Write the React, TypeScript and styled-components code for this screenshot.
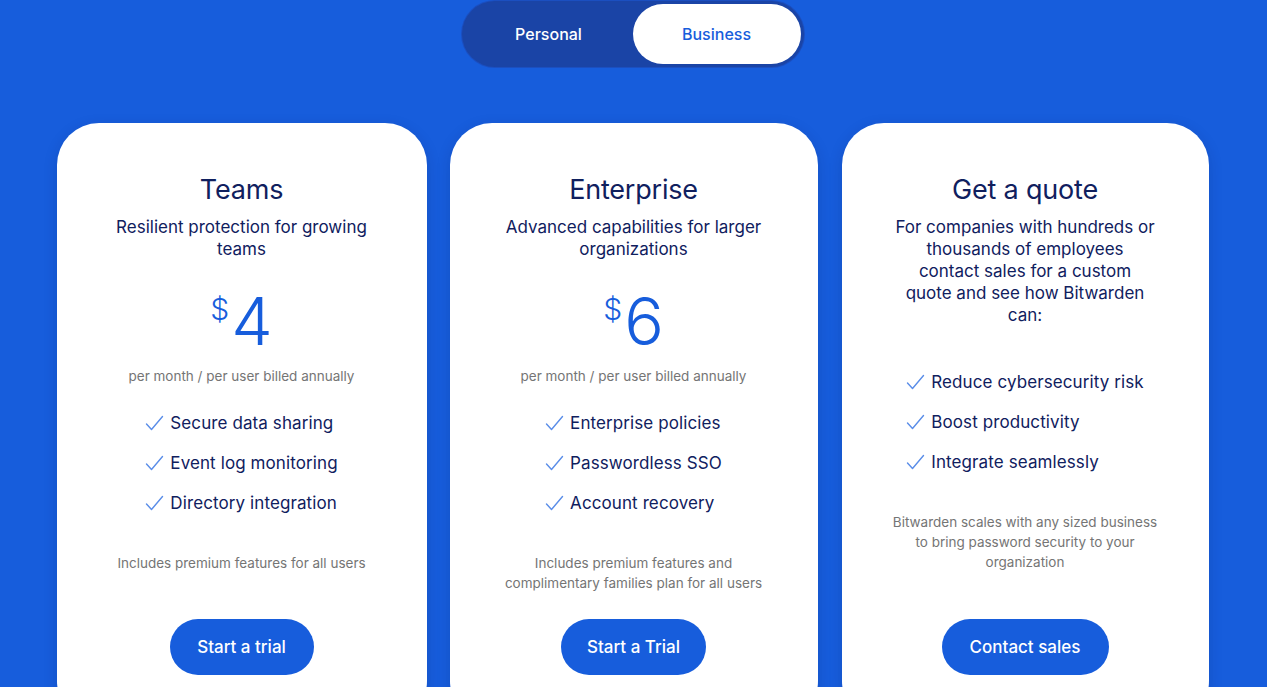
import styled, { createGlobalStyle } from "styled-components"

const GlobalStyle = createGlobalStyle`
  html, body {
    margin: 0;
    padding: 0;
    overflow: hidden;
    background: #175ddc;
  }
  body {
    font-family: Inter, "Noto Sans", sans-serif;
  }
`

const Page = styled.div`
  width: 1267px;
  height: 687px;
  overflow: hidden;
  background: #175ddc;
  display: flex;
  flex-direction: column;
  align-items: center;
  padding: 1px 2px 0 0;
  box-sizing: border-box;
`

const Toggle = styled.div`
  display: flex;
  align-items: center;
  width: 342px;
  height: 67px;
  padding: 3px;
  box-sizing: border-box;
  border-radius: 34px;
  background: #1a44a6;
  box-shadow: 0 0 0 1px #1b4fc0;
`

const ToggleOption = styled.div<{ $active?: boolean }>`
  flex: 1;
  height: 60px;
  display: flex;
  align-items: center;
  justify-content: center;
  border-radius: 30px;
  font-size: 16px;
  font-weight: 500;
  color: ${({ $active }) => ($active ? "#175ddc" : "#ffffff")};
  background: ${({ $active }) => ($active ? "#ffffff" : "transparent")};
`

const CardGrid = styled.div`
  display: grid;
  grid-template-columns: 370px 368px 368px;
  column-gap: 23px;
  margin-top: 56px;
  & > :nth-child(3) {
    margin-left: 1px;
  }
`

const Card = styled.div`
  height: 600px;
  background: #ffffff;
  border-radius: 42px;
  box-shadow: 0 4px 14px rgba(10, 30, 90, 0.18);
  display: flex;
  flex-direction: column;
  align-items: center;
  padding: 49px 20px 48px;
  box-sizing: border-box;
  text-align: center;
  color: #10205e;
`

const Title = styled.h2`
  margin: 0;
  font-size: 27px;
  line-height: 36px;
  font-weight: 400;
  letter-spacing: -0.2px;
`

const Subtitle = styled.p`
  margin: 8px 0 0;
  font-size: 17px;
  line-height: 22px;
  white-space: nowrap;
`

const Price = styled.div`
  margin-top: 25px;
  height: 72px;
  display: flex;
  justify-content: center;
  color: #175ddc;
  font-weight: 300;
`

const Currency = styled.span`
  font-size: 30px;
  line-height: 40px;
  margin-top: 4px;
  margin-right: 2px;
`

const Amount = styled.span`
  font-size: 66px;
  line-height: 72px;
`

const Billing = styled.div`
  margin-top: 9px;
  font-size: 13.5px;
  line-height: 20px;
  color: #757575;
`

const FeatureList = styled.ul<{ $gap: number }>`
  list-style: none;
  padding: 0;
  margin: ${({ $gap }) => $gap}px 0 0;
  text-align: left;
`

const Feature = styled.li`
  display: flex;
  align-items: center;
  gap: 6px;
  height: 40px;
  font-size: 17px;
  letter-spacing: 0.1px;
`

const Footnote = styled.p`
  margin: 30px 0 0;
  font-size: 13.5px;
  line-height: 20px;
  color: #757575;
  white-space: nowrap;
`

const ActionButton = styled.button<{ $width: number }>`
  margin-top: auto;
  width: ${({ $width }) => $width}px;
  height: 56px;
  flex-shrink: 0;
  border: none;
  border-radius: 28px;
  background: #175ddc;
  color: #ffffff;
  font-family: inherit;
  font-size: 17px;
  font-weight: 500;
  cursor: pointer;
`

const Check = () => (
  <svg width="19" height="16" viewBox="0 0 19 16" fill="none">
    <polyline points="1.5,9 6.5,14.5 17.5,1.5" stroke="#5a8de8" strokeWidth="1.4" strokeLinecap="round" strokeLinejoin="round" />
  </svg>
)

const Lines = ({ lines }: { lines: string[] }) => (
  <>
    {lines.map((l, i) => (
      <span key={i}>
        {l}
        {i < lines.length - 1 && <br />}
      </span>
    ))}
  </>
)

type Plan = {
  title: string
  subtitle: string[]
  price?: string
  features: string[]
  note: string[]
  cta: string
  ctaWidth: number
}

const plans: Plan[] = [
  {
    title: "Teams",
    subtitle: ["Resilient protection for growing", "teams"],
    price: "4",
    features: ["Secure data sharing", "Event log monitoring", "Directory integration"],
    note: ["Includes premium features for all users"],
    cta: "Start a trial",
    ctaWidth: 144,
  },
  {
    title: "Enterprise",
    subtitle: ["Advanced capabilities for larger", "organizations"],
    price: "6",
    features: ["Enterprise policies", "Passwordless SSO", "Account recovery"],
    note: ["Includes premium features and", "complimentary families plan for all users"],
    cta: "Start a Trial",
    ctaWidth: 145,
  },
  {
    title: "Get a quote",
    subtitle: [
      "For companies with hundreds or",
      "thousands of employees",
      "contact sales for a custom",
      "quote and see how Bitwarden",
      "can:",
    ],
    features: ["Reduce cybersecurity risk", "Boost productivity", "Integrate seamlessly"],
    note: ["Bitwarden scales with any sized business", "to bring password security to your", "organization"],
    cta: "Contact sales",
    ctaWidth: 167,
  },
]

const App = () => {
  return (
    <>
      <GlobalStyle />
      <Page>
        <Toggle>
          <ToggleOption>Personal</ToggleOption>
          <ToggleOption $active>Business</ToggleOption>
        </Toggle>
        <CardGrid>
          {plans.map((p) => (
            <Card key={p.title}>
              <Title>{p.title}</Title>
              <Subtitle>
                <Lines lines={p.subtitle} />
              </Subtitle>
              {p.price && (
                <>
                  <Price>
                    <Currency>$</Currency>
                    <Amount>{p.price}</Amount>
                  </Price>
                  <Billing>per month / per user billed annually</Billing>
                </>
              )}
              <FeatureList $gap={p.price ? 17 : 36}>
                {p.features.map((f) => (
                  <Feature key={f}>
                    <Check />
                    {f}
                  </Feature>
                ))}
              </FeatureList>
              <Footnote>
                <Lines lines={p.note} />
              </Footnote>
              <ActionButton $width={p.ctaWidth}>{p.cta}</ActionButton>
            </Card>
          ))}
        </CardGrid>
      </Page>
    </>
  )
}

export default App
